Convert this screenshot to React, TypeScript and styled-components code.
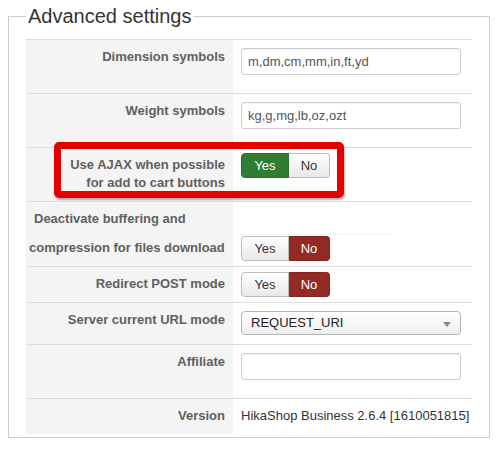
import React from "react";
import styled, { createGlobalStyle } from "styled-components";

const GlobalStyle = createGlobalStyle`
  body {
    margin: 4px 8px 8px;
    background: #ffffff;
    font-family: "Liberation Sans", Arial, sans-serif;
    font-size: 13px;
    color: #333;
  }
`;

const Fieldset = styled.fieldset`
  margin: 0;
  padding: 11px 17px 3px;
  border: 1px solid #cccccc;
  min-width: 0;
`;

const Legend = styled.legend`
  padding: 0 2px;
  font-size: 20px;
  line-height: 24px;
  color: #333;
`;

const Table = styled.div`
  display: flex;
  flex-direction: column;
`;

const Row = styled.div`
  position: relative;
  display: grid;
  grid-template-columns: 207px 1fr;
  border-top: 1px solid #dddddd;
`;

const Key = styled.div<{ $left?: boolean }>`
  background: #f4f4f4;
  padding: 8px 8px 9px;
  text-align: ${(p) => (p.$left ? "left" : "right")};
  font-weight: bold;
  font-size: 13px;
  line-height: 18px;
  color: #606060;
`;

const KeyLine = styled.span<{ $shift?: number; $gap?: number }>`
  display: block;
  white-space: nowrap;
  margin-left: ${(p) => p.$shift ?? 0}px;
  margin-top: ${(p) => p.$gap ?? 0}px;
`;

const Value = styled.div<{ $pad?: string }>`
  padding: ${(p) => p.$pad ?? "8px 8px"};
  line-height: 18px;
  white-space: nowrap;
`;

const BottomValue = styled.div`
  display: flex;
  flex-direction: column;
  justify-content: flex-end;
  padding: 0 8px 5px;
`;

const FaintLine = styled.div`
  width: 155px;
  margin-left: -4px;
  margin-bottom: 1px;
  border-top: 1px solid #f3f3f3;
`;

const Input = styled.input`
  box-sizing: border-box;
  display: block;
  width: 220px;
  height: 27px;
  margin: 0 0 10px;
  padding: 4px 6px;
  border: 1px solid #cccccc;
  border-radius: 3px;
  font-family: "Liberation Sans", Arial, sans-serif;
  font-size: 13px;
  color: #555;
  box-shadow: inset 0 1px 1px rgba(0, 0, 0, 0.05);
  outline: none;
`;

const Select = styled.div`
  box-sizing: border-box;
  display: flex;
  align-items: center;
  justify-content: space-between;
  width: 220px;
  height: 24px;
  margin: 0 0 9px;
  padding: 0 9px 0 9px;
  border: 1px solid #b5b5b5;
  border-radius: 4px;
  background: linear-gradient(#ffffff, #eeeeee);
  font-size: 13px;
  color: #222;
`;

const Caret = styled.span`
  width: 0;
  height: 0;
  border-left: 4px solid transparent;
  border-right: 4px solid transparent;
  border-top: 5px solid #888;
  margin-top: 2px;
`;

const BtnGroup = styled.div`
  display: flex;
  width: 89px;
  height: 25px;
`;

const Btn = styled.div<{ $on?: "yes" | "no" }>`
  box-sizing: border-box;
  display: flex;
  align-items: center;
  justify-content: center;
  font-size: 13px;
  border: 1px solid
    ${(p) => (p.$on === "yes" ? "#2a6f2d" : p.$on === "no" ? "#84241f" : "#bcbcbc")};
  background: ${(p) =>
    p.$on === "yes"
      ? "#2f7d32"
      : p.$on === "no"
      ? "#942a25"
      : "linear-gradient(#ffffff, #e8e8e8)"};
  color: ${(p) => (p.$on ? "#ffffff" : "#333333")};
  &:first-child {
    width: 48px;
    border-radius: 4px 0 0 4px;
  }
  &:last-child {
    flex: 1;
    border-radius: 0 4px 4px 0;
    border-left: none;
  }
`;

const Highlight = styled.div`
  position: absolute;
  left: 28px;
  top: -6px;
  width: 290px;
  height: 56px;
  box-sizing: border-box;
  border: 7px solid #e20000;
  border-radius: 5px;
  box-shadow: 1px 2px 2px rgba(0, 0, 0, 0.3);
  pointer-events: none;
`;

const YesNo = ({ on }: { on: "yes" | "no" }) => (
  <BtnGroup>
    <Btn $on={on === "yes" ? "yes" : undefined}>Yes</Btn>
    <Btn $on={on === "no" ? "no" : undefined}>No</Btn>
  </BtnGroup>
);

export default function App() {
  return (
    <>
      <GlobalStyle />
      <Fieldset>
        <Legend>Advanced settings</Legend>
        <Table>
          <Row>
            <Key>Dimension symbols</Key>
            <Value>
              <Input defaultValue="m,dm,cm,mm,in,ft,yd" />
            </Value>
          </Row>
          <Row>
            <Key>Weight symbols</Key>
            <Value>
              <Input defaultValue="kg,g,mg,lb,oz,ozt" />
            </Value>
          </Row>
          <Row>
            <Key>
              Use AJAX when possible
              <br />
              for add to cart buttons
            </Key>
            <Value $pad="5px 8px">
              <YesNo on="yes" />
            </Value>
            <Highlight />
          </Row>
          <Row>
            <Key $left>
              <KeyLine>Deactivate buffering and</KeyLine>
              <KeyLine $shift={-5} $gap={11}>
                compression for files download
              </KeyLine>
            </Key>
            <BottomValue>
              <FaintLine />
              <YesNo on="no" />
            </BottomValue>
          </Row>
          <Row>
            <Key>Redirect POST mode</Key>
            <Value $pad="5px 8px">
              <YesNo on="no" />
            </Value>
          </Row>
          <Row>
            <Key>Server current URL mode</Key>
            <Value $pad="8px 8px 0">
              <Select>
                REQUEST_URI
                <Caret />
              </Select>
            </Value>
          </Row>
          <Row>
            <Key>Affiliate</Key>
            <Value>
              <Input defaultValue="" />
            </Value>
          </Row>
          <Row>
            <Key>Version</Key>
            <Value $pad="8px 0 8px 8px">HikaShop Business 2.6.4 [1610051815]</Value>
          </Row>
        </Table>
      </Fieldset>
    </>
  );
}
